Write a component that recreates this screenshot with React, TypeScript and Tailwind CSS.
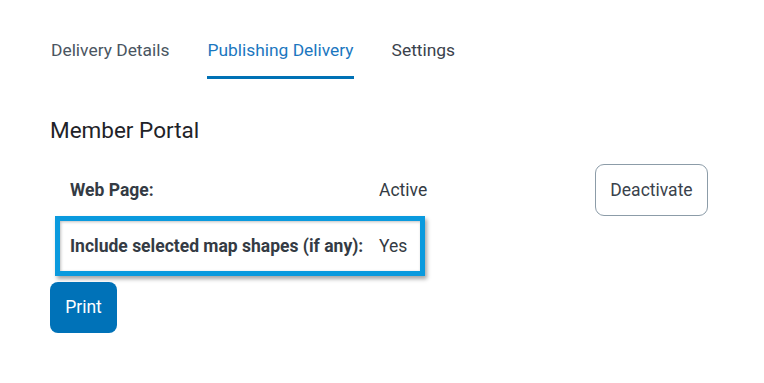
import React from "react";

export default function App() {
  return (
    <div className="w-[764px] h-[383px] bg-white font-['Roboto',sans-serif] overflow-hidden">
      <div className="pl-[51px] pt-[38px] flex gap-[38px] text-[17.4px] leading-[24px]">
        <div className="text-[#4a5561] pb-[14px] border-b-[3px] border-transparent">Delivery Details</div>
        <div className="text-[#1b77c0] pb-[14px] border-b-[3px] border-[#0071b5]">Publishing Delivery</div>
        <div className="text-[#3a424b] pb-[14px] border-b-[3px] border-transparent">Settings</div>
      </div>
      <div className="pl-[50px] mt-[36px] text-[22.5px] leading-[30px] text-[#1f2328]">Member Portal</div>
      <div className="pl-[55px] mt-[19px]">
        <div className="flex items-center">
          <div className="w-[370px] h-[52px] flex items-center px-[15px] text-[17.5px] text-[#343b44]">
            <div className="w-[309px] shrink-0 font-bold">Web Page:</div>
            <div className="whitespace-nowrap">Active</div>
          </div>
          <button className="ml-[170px] w-[113px] h-[52px] rounded-[9px] border border-[#8c9ca8] text-[17.5px] text-[#3a424b] bg-white">
            Deactivate
          </button>
        </div>
        <div className="w-[370px] h-[60px] flex items-center px-[10px] border-[5px] border-[#0a9ade] text-[17.5px] text-[#343b44] shadow-[2px_3px_4px_rgba(0,0,0,0.35),inset_1px_1px_3px_rgba(0,0,0,0.25)]">
          <div className="w-[309px] shrink-0 font-bold whitespace-nowrap">Include selected map shapes (if any):</div>
          <div className="whitespace-nowrap">Yes</div>
        </div>
        <button className="mt-[6px] -ml-[5px] w-[67px] h-[51px] rounded-[8px] bg-[#0072b8] text-white text-[17.5px]">
          Print
        </button>
      </div>
    </div>
  );
}
